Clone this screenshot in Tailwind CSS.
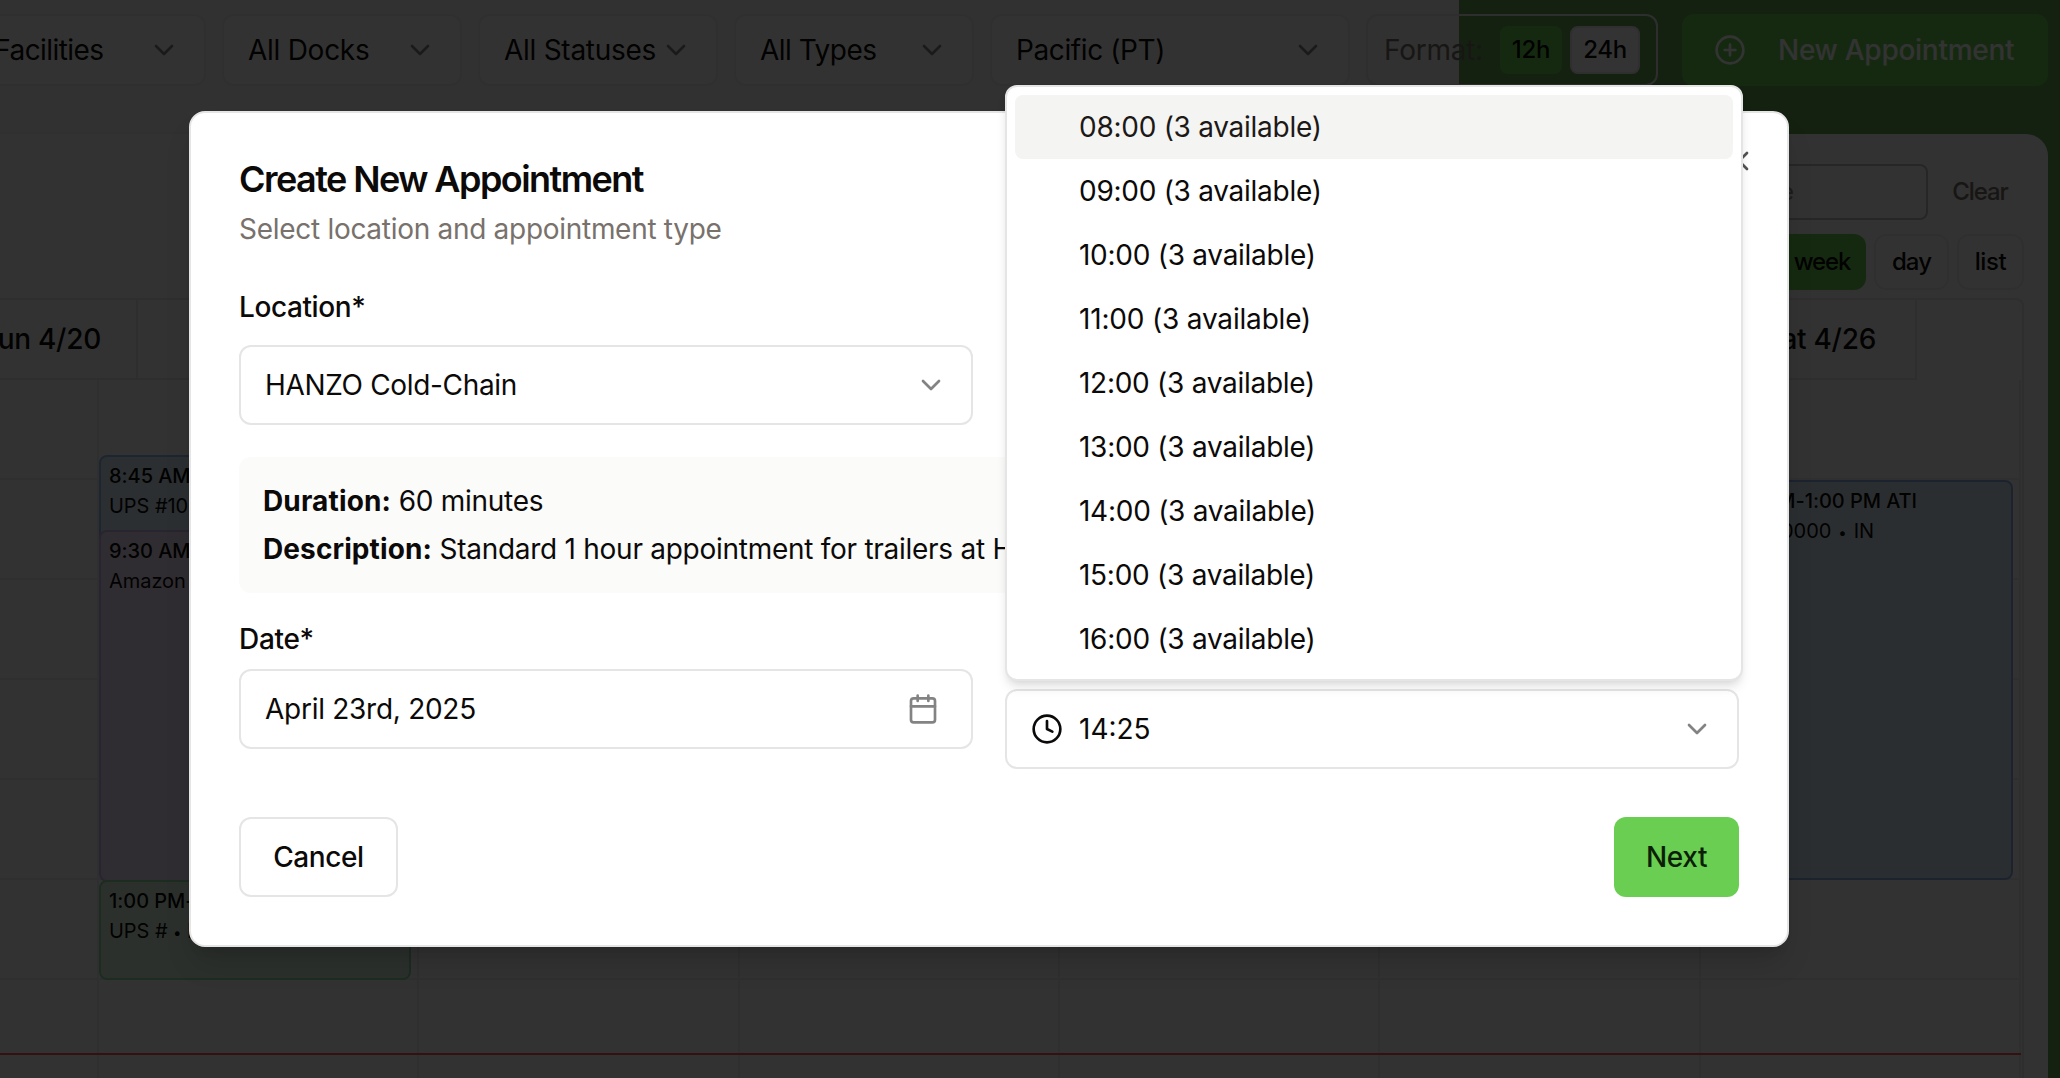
<!DOCTYPE html>
<html lang="en">
<head>
<meta charset="utf-8">
<title>Create New Appointment</title>
<script src="https://cdn.jsdelivr.net/npm/@tailwindcss/browser@4"></script>
</head>
<body class="relative h-[1078px] w-[2060px] overflow-hidden bg-[#66a353] font-[Inter,'Liberation_Sans',sans-serif] text-[28px] leading-10 tracking-[-0.27px] text-[#0c0a09]">
<svg class="hidden">
  <symbol id="chev" viewBox="0 0 24 24" fill="none" stroke="currentColor" stroke-width="2" stroke-linecap="round" stroke-linejoin="round"><path d="m6 9 6 6 6-6"/></symbol>
</svg>

<!-- Page behind the dialog -->
<div class="flex h-full flex-col">
  <header class="h-[134px] w-[1459px] shrink-0 border-b-2 border-[#eeeeee] bg-[#f2f2f2]">
    <div class="-ml-[94px] flex w-[2142px] gap-4 pt-[14px] whitespace-nowrap">
      <div class="flex h-[72px] w-[300px] shrink-0 items-center justify-between rounded-xl border-2 border-[#ececec] bg-[#fbfbfb] pr-6 pl-12"><span class="tracking-[-0.6px]">All Facilities</span><svg class="size-8 opacity-50"><use href="#chev"/></svg></div>
      <div class="flex h-[72px] w-60 shrink-0 items-center justify-between rounded-xl border-2 border-[#ececec] bg-[#fbfbfb] px-6"><span>All Docks</span><svg class="size-8 opacity-50"><use href="#chev"/></svg></div>
      <div class="flex h-[72px] w-60 shrink-0 items-center justify-between rounded-xl border-2 border-[#ececec] bg-[#fbfbfb] px-6"><span>All Statuses</span><svg class="size-8 opacity-50"><use href="#chev"/></svg></div>
      <div class="flex h-[72px] w-60 shrink-0 items-center justify-between rounded-xl border-2 border-[#ececec] bg-[#fbfbfb] px-6"><span class="tracking-[-0.5px]">All Types</span><svg class="size-8 opacity-50"><use href="#chev"/></svg></div>
      <div class="flex h-[72px] w-[360px] shrink-0 items-center justify-between rounded-xl border-2 border-[#ececec] bg-[#fbfbfb] px-6"><span class="tracking-[-0.4px]">Pacific (PT)</span><svg class="size-8 opacity-50"><use href="#chev"/></svg></div>
      <div class="flex h-[72px] w-[292px] shrink-0 items-center rounded-xl border-2 border-[#e5e5e5] pl-4">
        <span class="w-[116px] text-[#78716c]">Format:</span>
        <span class="flex h-12 w-[62px] items-center justify-center rounded-lg bg-[#69ce51] text-2xl font-medium">12h</span>
        <span class="ml-2 flex h-12 w-[70px] items-center justify-center rounded-lg border-2 border-[#ececec] bg-white text-2xl font-medium tracking-[-0.3px]">24h</span>
      </div>
      <div class="ml-2 flex h-[72px] w-[366px] shrink-0 items-center rounded-xl bg-[#69ce51] pl-8 text-white">
        <svg class="size-8" viewBox="0 0 24 24" fill="none" stroke="currentColor" stroke-width="2" stroke-linecap="round" stroke-linejoin="round"><circle cx="12" cy="12" r="10"/><path d="M8 12h8M12 8v8"/></svg>
        <span class="ml-8 font-medium">New Appointment</span>
      </div>
    </div>
  </header>

  <main class="flex min-h-0 w-[2048px] flex-1 flex-col overflow-hidden rounded-tr-[22px] bg-[#fbfbfb] pt-[30px] pr-6">
    <div class="flex h-14 shrink-0 justify-end gap-2 text-2xl">
      <div class="flex w-[480px] items-center overflow-hidden rounded-lg border-2 border-[#bcbcbc] text-[#8f8f8f]"><span class="w-[344px] text-right tracking-normal whitespace-nowrap">Search by load or reference</span></div>
      <div class="flex w-[88px] items-center justify-center rounded-xl bg-[#f7f7f7] font-medium tracking-[-1.1px] text-[#78716c]">Clear</div>
    </div>
    <div class="mt-[14px] flex h-14 shrink-0 justify-end gap-2 text-2xl font-medium tracking-[-0.9px]">
      <div class="flex w-[88px] items-center justify-center rounded-xl bg-[#69ce51] tracking-[-1.1px]">week</div>
      <div class="flex w-[75px] items-center justify-center rounded-xl border-2 border-[#ececec]">day</div>
      <div class="flex w-[67px] items-center justify-center rounded-xl border-2 border-[#ececec] tracking-[-0.4px]">list</div>
    </div>

    <section class="mt-2 flex min-h-0 flex-1 flex-col overflow-hidden rounded-tr-lg border-t-2 border-r-2 border-[#e3e3e3]">
      <div class="flex h-20 w-[1917px] shrink-0 font-medium">
        <div class="flex w-[138px] items-center justify-end border-r-2 border-b-2 border-[#e3e3e3] pr-[35px] whitespace-nowrap">Sun 4/20</div>
        <div class="flex flex-1 items-center justify-end border-r-2 border-b-2 border-[#e3e3e3] pr-10">Mon 4/21</div>
        <div class="flex flex-1 items-center justify-end border-r-2 border-b-2 border-[#e3e3e3] pr-10">Tue 4/22</div>
        <div class="flex flex-1 items-center justify-end border-r-2 border-b-2 border-[#e3e3e3] pr-10">Wed 4/23</div>
        <div class="flex flex-1 items-center justify-end border-r-2 border-b-2 border-[#e3e3e3] pr-10">Thu 4/24</div>
        <div class="flex flex-1 items-center justify-end border-r-2 border-b-2 border-[#e3e3e3] pr-10">Fri 4/25</div>
        <div class="flex flex-1 items-center justify-end border-r-2 border-b-2 border-[#e3e3e3] pr-[39px]">Sat 4/26</div>
      </div>
      <div class="relative h-[700px] w-[2021px] shrink-0 text-xl leading-[30px] tracking-[-0.05px] whitespace-nowrap">
        <div class="flex h-full">
          <div class="w-[99px] border-r-2 border-[#e8e8e8]"></div>
          <div class="flex-1 border-r-2 border-[#e8e8e8]"></div>
          <div class="flex-1 border-r-2 border-[#e8e8e8]"></div>
          <div class="flex-1 border-r-2 border-[#e8e8e8]"></div>
          <div class="flex-1 border-r-2 border-[#e8e8e8]"></div>
          <div class="flex-1 border-r-2 border-[#e8e8e8]"></div>
          <div class="flex-1 border-r-2 border-[#e8e8e8]"></div>
        </div>
        <div class="absolute inset-x-0 top-0">
          <div class="h-[100px] border-b-2 border-[#e8e8e8]"></div>
          <div class="h-[100px] border-b-2 border-[#e8e8e8]"></div>
          <div class="h-[100px] border-b-2 border-[#e8e8e8]"></div>
          <div class="h-[100px] border-b-2 border-[#e8e8e8]"></div>
          <div class="h-[100px] border-b-2 border-[#e8e8e8]"></div>
          <div class="h-[100px] border-b-2 border-[#e8e8e8]"></div>
        </div>
        <!-- Events, placed by start time and duration -->
        <div class="absolute top-[75px] left-[99px] h-[100px] w-[312px] overflow-hidden rounded-lg border-2 border-[#8fbdf0] bg-[#d8e8f4] px-2 py-1"><div class="font-medium">8:45 AM-9:45 AM UPS</div><div>UPS #10</div></div>
        <div class="absolute top-[150px] left-[99px] h-[352px] w-[312px] overflow-hidden rounded-lg border-2 border-[#cfb0f0] bg-[#ebdff2] px-2 py-1"><div class="font-medium">9:30 AM-1:00 PM</div><div>Amazon</div></div>
        <div class="absolute top-[500px] left-[99px] h-[100px] w-[312px] overflow-hidden rounded-lg border-2 border-[#8adca6] bg-[#dcf0df] px-2 py-1"><div class="font-medium">1:00 PM-2:00 PM UPS</div><div>UPS # <span class="text-[15px]">•</span> IN</div></div>
        <div class="absolute top-[100px] left-[1702px] h-[400px] w-[311px] overflow-hidden rounded-lg border-2 border-[#8cb0ea] bg-[#d8e6f0] px-2 py-1"><div class="w-[205px] text-right font-medium">9:00 AM-1:00 PM ATI</div><div class="w-[162px] text-right">ATI #10000<span class="mx-[7px] text-[15px]">•</span>IN</div></div>
        <div class="absolute inset-x-0 top-[673px] h-[2px] bg-[#ff5555]"></div>
      </div>
    </section>
  </main>
</div>

<div class="absolute inset-0 bg-black/80"></div>

<!-- Dialog -->
<div class="absolute top-[111px] left-[189px] flex h-[836px] w-[1600px] flex-col rounded-2xl border-2 border-[#e5e5e5] bg-white p-12 shadow-[0_20px_30px_-6px_rgb(0_0_0/0.15),0_8px_12px_-8px_rgb(0_0_0/0.15)]">
  <h2 class="text-4xl leading-9 font-semibold tracking-[-1.55px]">Create New Appointment</h2>
  <p class="mt-3 tracking-[-0.29px] text-[#78716c]">Select location and appointment type</p>

  <div class="mt-11 grid grid-cols-2 gap-8">
    <div>
      <div class="leading-7 font-medium tracking-[-0.4px]">Location*</div>
      <div class="mt-6 flex h-20 items-center justify-between rounded-xl border-2 border-[#e5e5e5] px-6"><span class="tracking-[-0.33px]">HANZO Cold-Chain</span><svg class="size-8 opacity-50"><use href="#chev"/></svg></div>
    </div>
    <div>
      <div class="leading-7 font-medium">Type*</div>
      <div class="mt-6 h-20 rounded-xl border-2 border-[#e5e5e5]"></div>
    </div>
  </div>

  <div class="mt-8 flex flex-col gap-2 rounded-xl bg-[#fbfbfa] p-6 whitespace-nowrap">
    <div><b class="tracking-[0.15px]">Duration:</b> 60 minutes</div>
    <div><b class="tracking-[0.1px]">Description:</b> Standard 1 hour appointment for trailers at HANZO</div>
  </div>

  <div class="mt-8 grid grid-cols-2 gap-8">
    <div>
      <div class="leading-7 font-medium tracking-[-0.3px]">Date*</div>
      <div class="mt-4 flex h-20 items-center justify-between rounded-xl border-2 border-[#e5e5e5] pr-8 pl-6"><span>April 23rd, 2025</span>
        <svg class="size-8 opacity-50" viewBox="0 0 24 24" fill="none" stroke="currentColor" stroke-width="2" stroke-linecap="round" stroke-linejoin="round"><path d="M8 2v4M16 2v4M3 10h18"/><rect width="18" height="18" x="3" y="4" rx="2"/></svg>
      </div>
    </div>
    <div>
      <div class="leading-7 font-medium">Time*</div>
      <div class="mt-9 flex h-20 items-center rounded-xl border-2 border-[#e5e5e5] px-6">
        <svg class="size-8" viewBox="0 0 24 24" fill="none" stroke="currentColor" stroke-width="2" stroke-linecap="round" stroke-linejoin="round"><circle cx="12" cy="12" r="10"/><path d="M12 6v6l4 2"/></svg>
        <span class="ml-4 tracking-normal">14:25</span>
        <svg class="ml-auto size-8 opacity-50"><use href="#chev"/></svg>
      </div>
    </div>
  </div>

  <div class="mt-12 flex h-20 justify-between font-medium tracking-[-0.4px]">
    <div class="flex w-[159px] items-center justify-center rounded-xl border-2 border-[#e5e5e5]">Cancel</div>
    <div class="flex w-[125px] items-center justify-center rounded-xl bg-[#69ce51] text-[#0c1f06]">Next</div>
  </div>

  <svg class="absolute top-8 right-8 size-8 opacity-70" viewBox="0 0 24 24" fill="none" stroke="currentColor" stroke-width="2" stroke-linecap="round" stroke-linejoin="round"><path d="M18 6 6 18M6 6l12 12"/></svg>
</div>

<!-- Time options -->
<div class="absolute top-[85px] left-[1005px] w-[738px] rounded-xl border-2 border-[#e5e5e5] bg-white p-2 shadow-[0_8px_12px_-2px_rgb(0_0_0/0.1),0_4px_8px_-4px_rgb(0_0_0/0.1)]">
  <div class="flex h-16 items-center rounded-lg bg-[#f4f4f3] pl-16 text-[#1c1917]">08:00 (3 available)</div>
  <div class="flex h-16 items-center pl-16">09:00 (3 available)</div>
  <div class="flex h-16 items-center pl-16">10:00 (3 available)</div>
  <div class="flex h-16 items-center pl-16 tracking-[-0.18px]">11:00 (3 available)</div>
  <div class="flex h-16 items-center pl-16">12:00 (3 available)</div>
  <div class="flex h-16 items-center pl-16">13:00 (3 available)</div>
  <div class="flex h-16 items-center pl-16">14:00 (3 available)</div>
  <div class="flex h-16 items-center pl-16">15:00 (3 available)</div>
  <div class="flex h-16 items-center pl-16">16:00 (3 available)</div>
</div>
</body>
</html>
